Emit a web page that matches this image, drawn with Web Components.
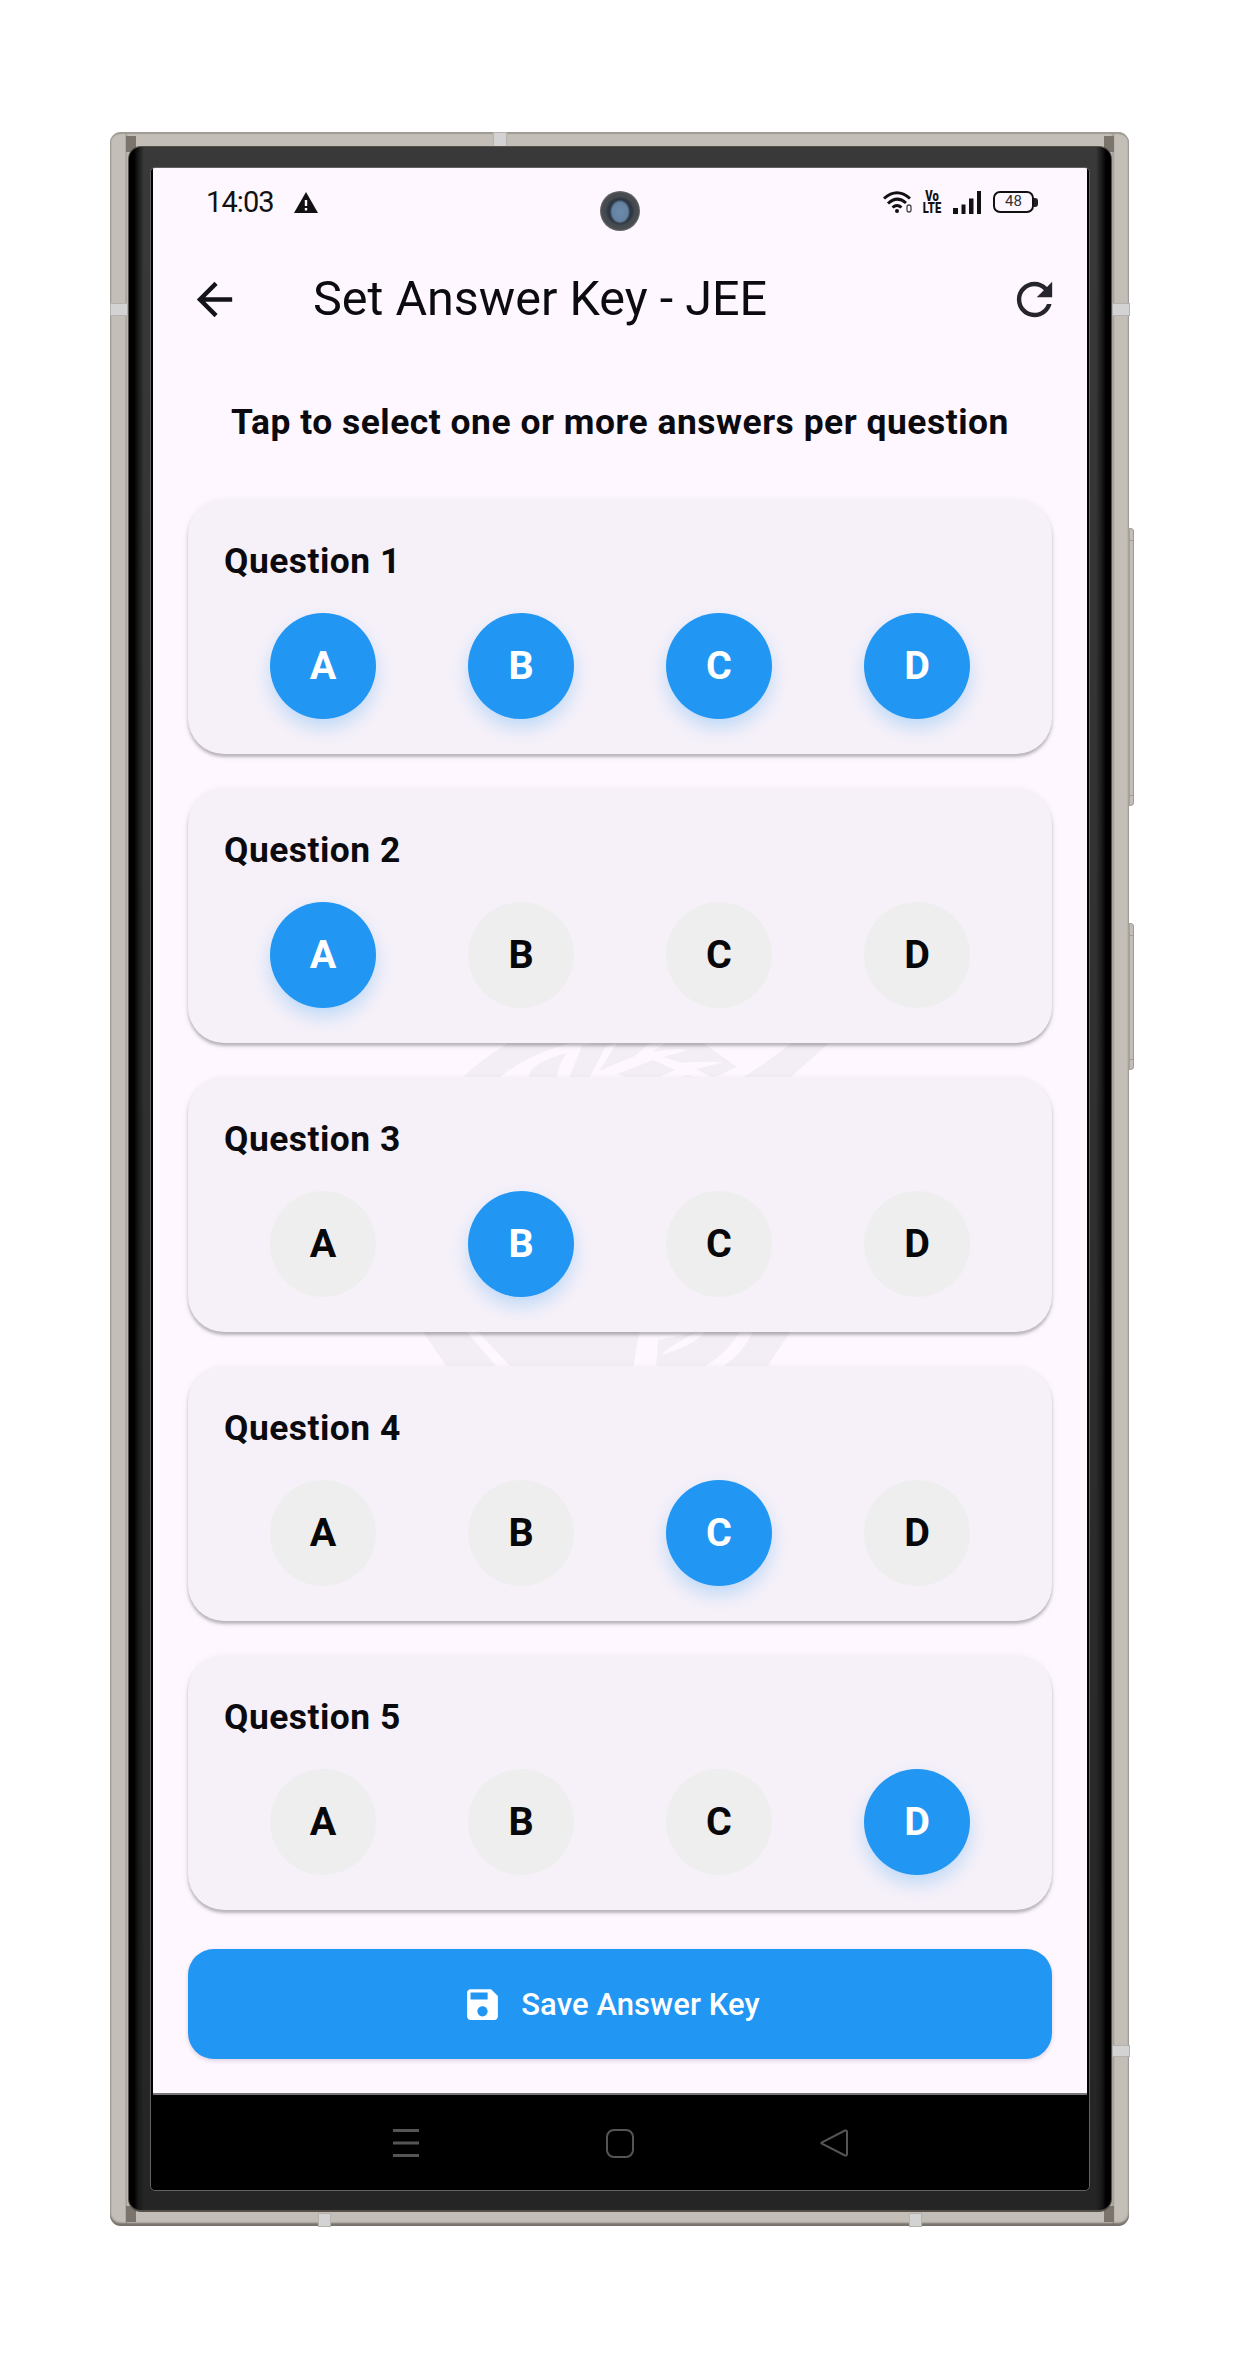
<!DOCTYPE html>
<html lang="en">
<head>
<meta charset="utf-8">
<title>Set Answer Key</title>
<style>
html,body{margin:0;background:#fff}
body{width:1245px;height:2359px;overflow:hidden;font-family:Roboto,"Liberation Sans",sans-serif;color:#0b0b0f}
</style>
</head>
<body>
<phone-frame>
  <status-bar></status-bar>
  <app-bar>Set Answer Key - JEE</app-bar>
  <answer-list>
    <question-card number="1" selected="ABCD"></question-card>
    <question-card number="2" selected="A"></question-card>
    <question-card number="3" selected="B"></question-card>
    <question-card number="4" selected="C"></question-card>
    <question-card number="5" selected="D"></question-card>
  </answer-list>
  <save-button>Save Answer Key</save-button>
  <nav-bar slot="nav"></nav-bar>
</phone-frame>
<script>
function define(name, render) {
  customElements.define(name, class extends HTMLElement {
    constructor() { super(); this.attachShadow({mode: "open"}); }
    connectedCallback() { this.shadowRoot.innerHTML = render(this); }
  });
}

define("phone-frame", () => `
<style>
:host{display:block;box-sizing:border-box;padding:132px 116px 133px 110px}
.body{position:relative;box-sizing:border-box;width:1019px;height:2094px;padding:14px 17px 14px 18px;border-radius:11px;
 background:linear-gradient(90deg,#aaa59e 0,#c3beb7 2px,#c3beb7 15px,#a19b93 16px,#c3beb7 18px,#c3beb7 1001px,#a19b93 1003px,#c3beb7 1005px,#c3beb7 1017px,#aaa59e 1019px)}
.body:before{content:"";position:absolute;inset:0;border-radius:11px;box-shadow:inset 0 2px 1px #a09b95,inset 0 -3px 2px #77716b}
.band{position:absolute;background:#d3d3d3;box-shadow:0 0 0 1px #b5b2ae}
.corner{position:absolute;width:10px;height:16px;background:#7a746c}
.side{position:absolute;left:1018px;width:6px;box-sizing:border-box;border:1px solid #9f9991;border-left:2px solid #a7a199;background:#c3beb7;border-radius:0 4px 4px 0}
.side:before,.side:after{content:"";position:absolute;left:0;right:0;height:1px;background:#a39d95}
.side:before{top:11px}.side:after{bottom:9px}
.bezel{position:relative;box-sizing:border-box;height:2066px;padding:20px 24px 19px 24px;border-radius:13px;border:1px solid #55504a;border-width:1px 1px 2px 1px;
 background:linear-gradient(90deg,#000 0,#000 5px,#181818 9px,transparent 15px,transparent 967px,#181818 973px,#000 977px,#000 100%),linear-gradient(#393939,#303030 45%,#252525)}
.glass{box-sizing:border-box;height:2024px;margin:0 -3px;border:1px solid #626262;border-width:1px;border-radius:5px;background:#000;padding:0 2px;display:flex;flex-direction:column;overflow:hidden}
.screen{height:1927px;background:#fef7ff;display:flex;flex-direction:column;border-bottom:2px solid #777;box-sizing:border-box;flex:none}
.cam{position:absolute;left:490px;top:59px;width:40px;height:40px;border-radius:50%;background:radial-gradient(ellipse 10px 12px at 50% 52%,#6c8bad 0,#64819f 80%,transparent 100%),radial-gradient(circle,#2d3a4c 0 11px,#303438 12px,#3c4654 14px,#484b4d 15px,#494c4e 18px,#6b6e70 20px)}
</style>
<div class="body">
 <div class="corner" style="left:16px;top:4px"></div><div class="corner" style="right:15px;top:4px"></div>
 <div class="corner" style="left:16px;bottom:4px"></div><div class="corner" style="right:15px;bottom:4px"></div>
 <div class="band" style="left:384px;top:1px;width:12px;height:13px"></div>
 <div class="band" style="left:1px;top:172px;width:16px;height:11px"></div>
 <div class="band" style="right:0;top:172px;width:16px;height:11px"></div>
 <div class="band" style="right:0;top:1914px;width:16px;height:10px"></div>
 <div class="band" style="left:209px;bottom:0;width:11px;height:12px"></div>
 <div class="band" style="left:800px;bottom:0;width:11px;height:12px"></div>
 <div class="side" style="top:396px;height:278px"></div>
 <div class="side" style="top:791px;height:147px"></div>
 <div class="bezel"><div class="glass"><div class="screen"><slot></slot></div><slot name="nav"></slot></div></div>
 <div class="cam"></div>
</div>`);

define("status-bar", () => `
<style>
:host{display:flex;align-items:center;height:68px;padding:0 49px 0 53px;color:#111;flex:none}
.time{font-size:29px;line-height:34px;letter-spacing:-.9px;width:88px;font-weight:400}
svg{display:block}
.right{margin-left:auto;display:flex;align-items:center}
.volte{font:700 14px/12px Roboto,sans-serif;text-align:center;width:20px;margin:0 10px 0 9px;transform:scaleX(.8)}
.volte b{display:flex;justify-content:center;font-weight:900}
.batt{box-sizing:border-box;width:41px;height:22px;border:2.5px solid #111;border-radius:7px;font:400 15px/17px Roboto,sans-serif;text-align:center;color:#333}
.cap{width:4px;height:9px;border-radius:0 3px 3px 0;background:#222}
</style>
<span class="time">14:03</span>
<svg width="24" height="21" viewBox="0 0 24 21"><path d="M12 0 24 21H0Z" fill="#111"/><path d="M12 8v6M12 16v2.5" stroke="#fef7ff" stroke-width="2.4"/></svg>
<div class="right">
<svg width="30" height="24" viewBox="0 0 30 24" fill="none" stroke="#111" stroke-width="3"><path d="M1 8.500Q14 -3 27 8.500M5 13.500Q14 5 23 13"/><path d="M9.500 17.500Q14 13.500 18.500 17.500"/><circle cx="14" cy="21" r="2" fill="#111" stroke="none"/><rect x="24" y="15" width="4" height="7" rx="2" stroke-width="1.300" stroke="#444"/></svg>
<div class="volte"><b>Vo</b><b>LTE</b></div>
<svg width="30" height="23" viewBox="0 0 30 23"><path d="M1 17h5v6H1zM9.500 13.500h4V23h-4zM17 7.500h4.500V23H17zM25 0h4v23h-4z" fill="#111"/></svg>
<div class="batt" style="margin-left:11px">48</div><div class="cap"></div>
</div>`);

define("app-bar", () => `
<style>
:host{display:flex;align-items:center;height:127px;padding:0 26px 0 35px;flex:none}
h1{margin:-2px 0 0 72px;font-size:48.500px;font-weight:400;line-height:60px;flex:1;color:#0c0b10;white-space:nowrap}
svg{display:block;width:53px;height:53px;fill:#15131a}
</style>
<svg viewBox="0 0 24 24"><path d="M20 11H7.830l5.590-5.590L12 4l-8 8 8 8 1.410-1.410L7.830 13H20v-2z"/></svg>
<h1><slot></slot></h1>
<svg viewBox="0 0 24 24" style="fill:#26242c"><path d="M17.650 6.350C16.200 4.900 14.210 4 12 4c-4.420 0-7.990 3.580-7.990 8s3.570 8 7.990 8c3.730 0 6.840-2.550 7.730-6h-2.080c-.82 2.330-3.040 4-5.650 4-3.310 0-6-2.690-6-6s2.690-6 6-6c1.660 0 3.140.69 4.220 1.780L13 11h7V4l-2.350 2.350z"/></svg>`);

define("answer-list", () => `
<style>
:host{display:flex;flex-direction:column;padding:35px 35px 0;position:relative;flex:none;gap:34px}
p{margin:0 0 19px;height:48px;line-height:48px;font-size:35.400px;font-weight:700;text-align:center;white-space:nowrap;letter-spacing:.52px}
svg{position:absolute;left:247px;top:677px}
</style>
<svg width="480" height="360" viewBox="0 0 480 360" fill="#f3eef5">
<path d="M62 38Q80 20 110 2H170L164 5Q125 16 99 38ZM129 38Q128 23 167 13Q158 24 157 38ZM169 38 182 6 200 2H216L205 8 189 38ZM199 31 217 3H250L235 16ZM217 34 253 20 275 30 257 38H227ZM252 12 267 2H302L337 27 313 38 296 29 324 22Q292 21 283 23L263 17 288 10Q270 8 252 12ZM278 38 288 35 296 38ZM342 38Q370 20 393 2H430L390 38Z"/>
<path d="M23 292H67L97 327H47ZM78 292H240Q235 309 234 327H111ZM258 300 297 292Q264 309 262 315Q296 304 305 292H340Q323 317 303 327H256ZM353 292H390L367 327H322Q342 314 353 292Z"/>
</svg>
<p>Tap to select one or more answers per question</p>
<slot></slot>`);

define("question-card", el => `
<style>
:host{display:block;box-sizing:border-box;height:255px;padding:37px 36px 0;border-radius:36px;background:#f6f1f9;position:relative;box-shadow:0 3px 3px rgba(0,0,0,.23),0 2px 7px rgba(0,0,0,.08)}
h2{margin:0;font-size:35.400px;line-height:50px;font-weight:700;letter-spacing:.5px}
.row{display:flex;justify-content:space-around;margin-top:27px}
answer-choice{flex:none}
</style>
<h2>Question ${el.getAttribute("number")}</h2>
<div class="row">${[..."ABCD"].map(c => `<answer-choice ${el.getAttribute("selected").includes(c) ? "on" : ""}>${c}</answer-choice>`).join("")}</div>`);

define("answer-choice", () => `
<style>
:host{display:flex;align-items:center;justify-content:center;box-sizing:border-box;width:106px;height:106px;padding-bottom:2px;border-radius:50%;background:#eee;color:#08080a;font-size:39.500px;line-height:47px;font-weight:700}
:host([on]){background:#2196f3;color:#fff;box-shadow:0 9px 18px rgba(33,150,243,.25)}
</style><slot></slot>`);

define("save-button", () => `
<style>
:host{display:flex;align-items:center;justify-content:center;box-sizing:border-box;height:110px;margin:39px 35px 0;padding:1px 18px 0 0;border-radius:26px;background:#2196f3;color:#fff;font-size:31px;line-height:36px;font-weight:500;gap:18px;letter-spacing:.08px;box-shadow:0 2px 4px rgba(60,20,60,.16);white-space:nowrap;flex:none}
svg{width:41px;height:41px;fill:#fff}
</style>
<svg viewBox="0 0 24 24"><path d="M17 3H5c-1.110 0-2 .9-2 2v14c0 1.100.89 2 2 2h14c1.100 0 2-.9 2-2V7l-4-4zm-5 16c-1.660 0-3-1.340-3-3s1.340-3 3-3 3 1.340 3 3-1.340 3-3 3zm3-10H5V5h10v4z"/></svg>
<span><slot></slot></span>`);

define("nav-bar", () => `
<style>
:host{display:flex;flex:1;align-items:center;justify-content:center;gap:186px;padding-top:1px;background:#000}
svg{display:block;width:28px;height:30px;fill:none;stroke:#555;stroke-width:2}
</style>
<svg viewBox="0 0 28 30"><path d="M1 2.500h26M1 15h26M1 27.500h26" stroke-width="3"/></svg>
<svg viewBox="0 0 28 30"><rect x="1" y="2" width="26" height="27" rx="7"/></svg>
<svg viewBox="0 0 28 30"><path d="M25 2.500Q27 2 27 4V26Q27 28 25 27.500L1.500 15.500V14.500Z"/></svg>`);
</script>
</body>
</html>
